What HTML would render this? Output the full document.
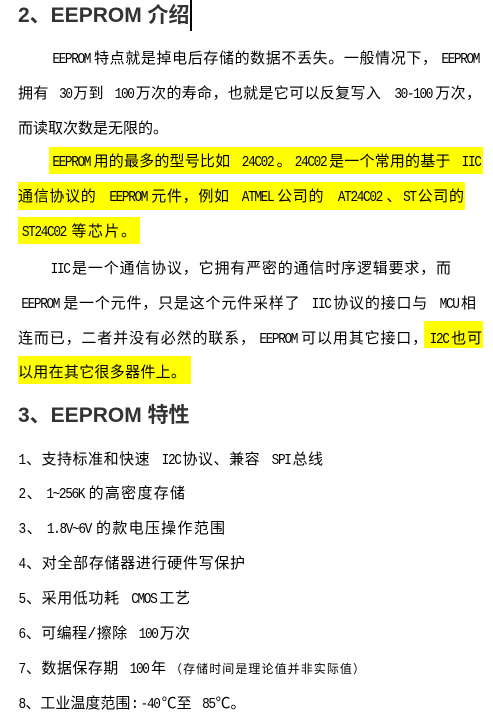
<!DOCTYPE html>
<html><head><meta charset="utf-8"><style>
html,body{margin:0;padding:0;background:#fff;width:493px;height:721px;overflow:hidden;position:relative}
.l{position:absolute;left:18px;height:20px;line-height:20px;font-size:15px;color:#000;font-family:"Liberation Mono","Noto Sans CJK SC",monospace;white-space:nowrap;text-align:justify;text-align-last:justify}
.l b{font-weight:normal;font-size:15px;letter-spacing:-1.6px;transform:scaleX(.85);display:inline-block}
.h{position:absolute;left:18px;font-size:21px;font-weight:bold;color:#333;font-family:"Liberation Sans","Noto Sans CJK SC",sans-serif;white-space:nowrap;line-height:26px;text-align-last:justify}
.hl{position:absolute;background:#ffff00}
</style></head><body>
<div class="h" style="top:3px;width:170px">2、EEPROM 介绍</div>
<div style="position:absolute;left:190px;top:0;width:2px;height:31px;background:#000"></div>

<div class="l" style="top:50px;left:49px;width:433px"><b>EEPROM</b>特点就是掉电后存储的数据不丢失。一般情况下，<b>EEPROM</b></div>
<div class="l" style="top:85px;width:463px">拥有 <b>30</b>万到 <b>100</b>万次的寿命，也就是它可以反复写入 <b>30-100</b>万次，</div>
<div class="l" style="top:120px;width:140px">而读取次数是无限的。</div>

<div class="hl" style="left:49px;top:147px;width:434px;height:27px"></div>
<div class="hl" style="left:18px;top:182px;width:447px;height:28px"></div>
<div class="hl" style="left:18px;top:217px;width:122px;height:27px"></div>
<div class="l" style="top:153px;left:49px;width:433px"><b>EEPROM</b>用的最多的型号比如 <b>24C02</b>。<b>24C02</b>是一个常用的基于 <b>IIC</b></div>
<div class="l" style="top:188px;width:446px">通信协议的 <b>EEPROM</b>元件，例如 <b>ATMEL</b>公司的 <b>AT24C02</b>、<b>ST</b>公司的</div>
<div class="l" style="top:223px;width:118px"><b>ST24C02</b>等芯片。</div>

<div class="l" style="top:260px;left:49px;width:402px"><b>IIC</b>是一个通信协议，它拥有严密的通信时序逻辑要求，而</div>
<div class="l" style="top:295px;width:458px"><b>EEPROM</b>是一个元件，只是这个元件采样了 <b>IIC</b>协议的接口与 <b>MCU</b>相</div>
<div class="hl" style="left:424px;top:321px;width:59px;height:27px"></div>
<div class="hl" style="left:18px;top:356px;width:173px;height:28px"></div>
<div class="l" style="top:330px;width:464px">连而已，二者并没有必然的联系，<b>EEPROM</b>可以用其它接口，<b>I2C</b>也可</div>
<div class="l" style="top:364px;width:168px">以用在其它很多器件上。</div>

<div class="h" style="top:403px;width:171px">3、EEPROM 特性</div>

<div class="l" style="top:451px;width:305px"><b>1</b>、支持标准和快速 <b>I2C</b>协议、兼容 <b>SPI</b>总线</div>
<div class="l" style="top:485px;width:167px"><b>2</b>、<b>1~256K</b>的高密度存储</div>
<div class="l" style="top:520px;width:207px"><b>3</b>、<b>1.8V~6V</b>的款电压操作范围</div>
<div class="l" style="top:555px;width:227px"><b>4</b>、对全部存储器进行硬件写保护</div>
<div class="l" style="top:590px;width:172px"><b>5</b>、采用低功耗 <b>CMOS</b>工艺</div>
<div class="l" style="top:625px;width:172px"><b>6</b>、可编程/擦除 <b>100</b>万次</div>
<div class="l" style="top:660px;width:148px"><b>7</b>、数据保存期 <b>100</b>年</div>
<div class="l" style="top:660px;left:170px;width:195px;font-size:12px">（存储时间是理论值并非实际值）</div>
<div class="l" style="top:695px;width:212px"><b>8</b>、工业温度范围:<b>-40</b>℃至 <b>85</b>℃。</div>
</body></html>
